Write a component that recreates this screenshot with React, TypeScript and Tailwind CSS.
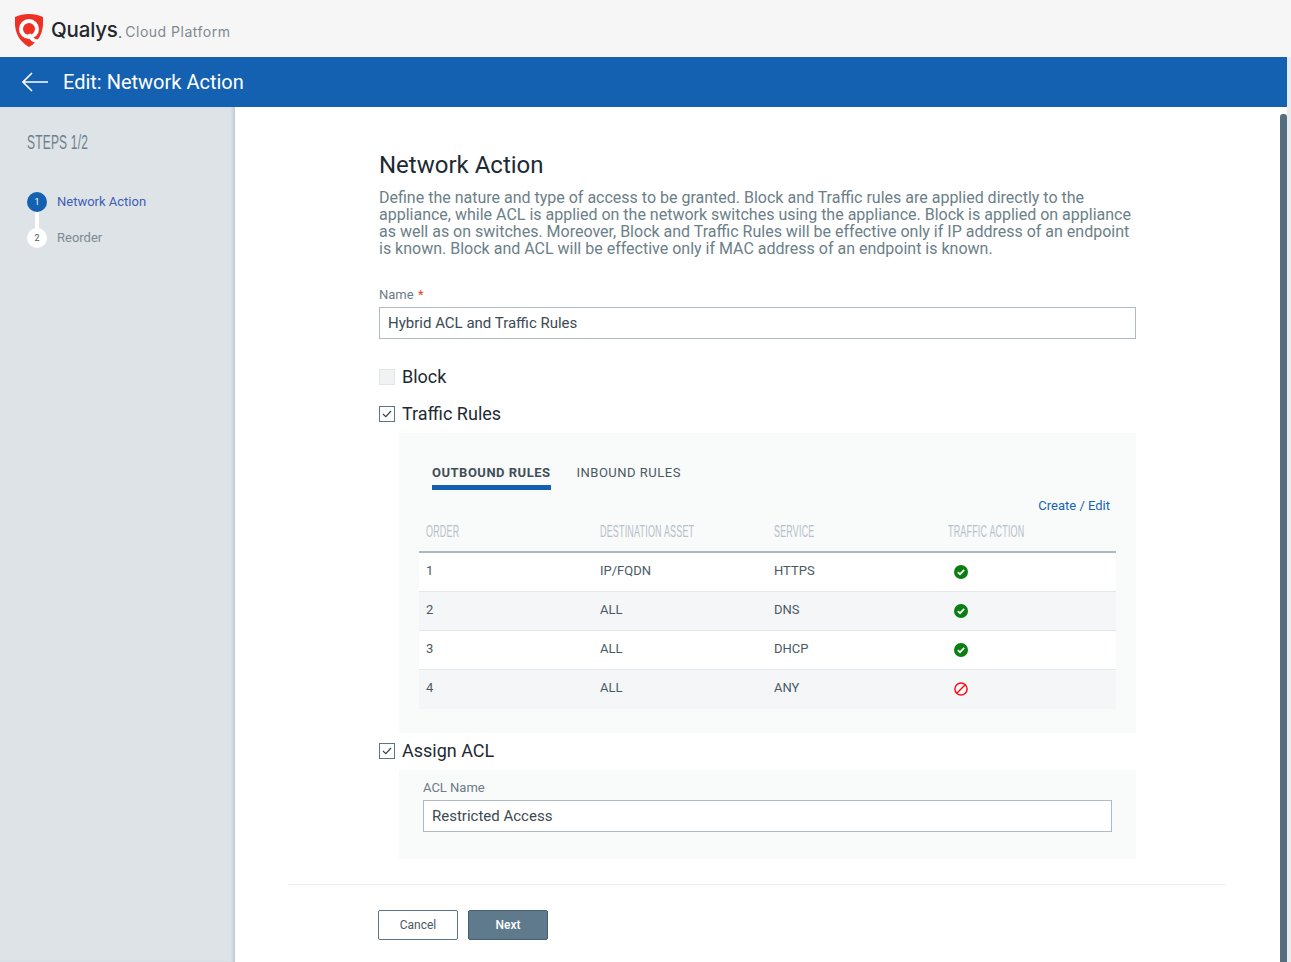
const roboto = "font-['Roboto','Liberation_Sans',sans-serif]";

const rules = [
  { order: "1", dest: "IP/FQDN", service: "HTTPS", allow: true },
  { order: "2", dest: "ALL", service: "DNS", allow: true },
  { order: "3", dest: "ALL", service: "DHCP", allow: true },
  { order: "4", dest: "ALL", service: "ANY", allow: false },
];

function Logo() {
  return (
    <svg width="28" height="33" viewBox="0 0 28 33" className="shrink-0">
      <path d="M14 0C19 0 24 1 28 3C28.6 14 27.5 25 14 33C0.5 25 -0.6 14 0 3C4 1 9 0 14 0Z" fill="#ee3124" />
      <circle cx="14" cy="15" r="8" fill="none" stroke="#fff" strokeWidth="4" />
      <path d="M14 20C15 24 18.5 27 23.5 27.5" fill="none" stroke="#fff" strokeWidth="3.4" />
    </svg>
  );
}

function Check({ on, disabled }: { on?: boolean; disabled?: boolean }) {
  return (
    <span className={`w-4 h-4 shrink-0 flex items-center justify-center border ${disabled ? "bg-[#f1f2f3] border-[#e2e5e7]" : "bg-white border-[#5b7585]"}`}>
      {on && (
        <svg width="10" height="8" viewBox="0 0 10 8">
          <path d="M1 4L3.8 6.6L9 1" fill="none" stroke="#33424c" strokeWidth="1.2" />
        </svg>
      )}
    </span>
  );
}

function CheckRow({ label, on, disabled, className }: { label: string; on?: boolean; disabled?: boolean; className?: string }) {
  return (
    <div className={`flex items-center gap-[7px] h-6 text-[18px] text-[#1d2a33] ${className ?? ""}`}>
      <Check on={on} disabled={disabled} />
      <span className="-mt-[2px]">{label}</span>
    </div>
  );
}

function HeadCell({ children }: { children: string }) {
  return (
    <div className="w-[174px] pl-[7px] overflow-visible whitespace-nowrap -mt-[2px]">
      <span className="inline-block origin-left scale-x-[0.56] font-['Liberation_Sans',sans-serif] text-[16px] tracking-[0.35px] text-[#b4c1ca]">{children}</span>
    </div>
  );
}

function StatusIcon({ allow }: { allow: boolean }) {
  if (allow) {
    return (
      <svg width="14" height="14" viewBox="0 0 14 14" className="ml-[6px] mt-[2px]">
        <circle cx="7" cy="7" r="7" fill="#0a7d13" />
        <path d="M3.8 7.2L6 9.2L10.2 4.9" fill="none" stroke="#fff" strokeWidth="1.7" />
      </svg>
    );
  }
  return (
    <svg width="14" height="14" viewBox="0 0 14 14" className="ml-[6px] mt-[2px]">
      <circle cx="7" cy="7" r="6.1" fill="none" stroke="#f5121c" strokeWidth="1.5" />
      <path d="M2.8 11.2L11.2 2.8" stroke="#f5121c" strokeWidth="1.5" />
    </svg>
  );
}

export default function App() {
  return (
    <div className={`h-screen overflow-hidden bg-white ${roboto}`}>
      <div className="h-[57px] bg-[#f6f6f6] flex items-center pl-[15px] pt-[3px]">
        <Logo />
        <span className="ml-[8px] font-['Inter',sans-serif] font-medium text-[20.5px] tracking-[-0.2px] text-[#23282c]">Qualys</span>
        <span className="font-['Inter',sans-serif] text-[16px] text-[#6b7a84] leading-none mt-[3px]">.</span>
        <span className="ml-[3px] mt-[2px] font-['Inter',sans-serif] text-[14px] tracking-[0.5px] text-[#7d8a94]">Cloud Platform</span>
      </div>

      <div className="flex h-[905px]">
        <div className="flex-1 min-w-0 flex flex-col">
          <div className="h-[50px] shrink-0 bg-[#1361b0] flex items-center pl-[22px] text-white">
            <svg width="26" height="20" viewBox="0 0 26 20">
              <path d="M26 10H1M10 1L1 10L10 19" fill="none" stroke="#fff" strokeWidth="1.6" />
            </svg>
            <span className="ml-[15px] text-[20px]">Edit: Network Action</span>
          </div>

          <div className="flex flex-1 min-h-0">
            <aside className="w-[235px] shrink-0 bg-[#dde3e7] shadow-[inset_-3px_0_3px_-1px_#bfc9cf] pl-[27px] pt-[24px]">
              <div className="h-[22px] whitespace-nowrap">
                <span className="inline-block origin-left scale-x-[0.57] font-['Liberation_Sans',sans-serif] text-[21px] tracking-[0.35px] leading-[22px] text-[#6d818c]">STEPS 1/2</span>
              </div>
              <div className="mt-[39px] flex items-center gap-[10px] h-5">
                <span className="w-5 h-5 pt-[1px] rounded-full bg-[#1361b0] text-white text-[9px] flex items-center justify-center">1</span>
                <span className="text-[13px] text-[#3d5eb3]">Network Action</span>
              </div>
              <div className="w-1 h-4 ml-2 bg-white" />
              <div className="flex items-center gap-[10px] h-5">
                <span className="w-5 h-5 pt-[1px] rounded-full bg-white text-[#4a5961] text-[9px] flex items-center justify-center">2</span>
                <span className="text-[13px] text-[#7b8a92]">Reorder</span>
              </div>
            </aside>

            <main className="flex-1 min-w-0 flex flex-col">
              <div className="pl-[144px] pt-[43px]">
                <div className="w-[757px]">
                  <h1 className="text-[24px] leading-[30px] text-[#1d2a33]">Network Action</h1>
                  <p className="mt-[9px] text-[16px] leading-[17px] text-[#6b8088]">
                    Define the nature and type of access to be granted. Block and Traffic rules are applied directly to the appliance, while ACL is applied on the network switches using the appliance. Block is applied on appliance as well as on switches. Moreover, Block and Traffic Rules will be effective only if IP address of an endpoint is known. Block and ACL will be effective only if MAC address of an endpoint is known.
                  </p>

                  <div className="mt-[29px] h-[17px] text-[13px] leading-[17px] text-[#6b7c88]">
                    Name <span className="ml-[1px] text-[#e8412f]">*</span>
                  </div>
                  <div className="mt-[4px] h-8 border border-[#aebbc4] px-2 flex items-center text-[15px] text-[#3c4a52]">Hybrid ACL and Traffic Rules</div>

                  <CheckRow label="Block" disabled className="mt-[26px]" />
                  <CheckRow label="Traffic Rules" on className="mt-[13px]" />

                  <div className="mt-[7px] ml-5 h-[300px] bg-[#f9fafa] pl-5 pr-5">
                    <div className="flex pl-[13px] pt-[32px] gap-[26px] text-[13px] leading-[15px] tracking-[0.5px]">
                      <div className="h-[25px] border-b-[5px] border-[#1361b0] font-bold text-[#414f58]">OUTBOUND RULES</div>
                      <div className="text-[#4a5862]">INBOUND RULES</div>
                    </div>
                    <div className="mt-[7px] pr-[6px] h-[17px] text-right text-[13px] leading-[17px] text-[#1565b5]">Create / Edit</div>
                    <div className="flex h-[36px] mt-[1px] items-center border-b-2 border-[#aab8c2] box-content">
                      <HeadCell>ORDER</HeadCell>
                      <HeadCell>DESTINATION ASSET</HeadCell>
                      <HeadCell>SERVICE</HeadCell>
                      <HeadCell>TRAFFIC ACTION</HeadCell>
                    </div>
                    {rules.map((r, i) => (
                      <div key={r.order} className={`flex items-center h-[39px] border-b text-[13px] text-[#495a64] ${i === 3 ? "border-transparent" : "border-[#e5e8ea]"} ${i % 2 === 0 ? "bg-white" : "bg-[#f5f6f8]"}`}>
                        <div className="w-[174px] pl-[7px] pb-[2px]">{r.order}</div>
                        <div className="w-[174px] pl-[7px] pb-[2px]">{r.dest}</div>
                        <div className="w-[174px] pl-[7px] pb-[2px]">{r.service}</div>
                        <div className="w-[174px] pl-[7px] pb-[2px]">
                          <StatusIcon allow={r.allow} />
                        </div>
                      </div>
                    ))}
                  </div>

                  <CheckRow label="Assign ACL" on className="mt-[6px]" />
                  <div className="mt-[7px] ml-5 h-[89px] bg-[#f9fafa] pl-6 pr-6 pt-[9px]">
                    <div className="h-[17px] text-[13px] leading-[17px] text-[#6b7c88]">ACL Name</div>
                    <div className="mt-[4px] h-8 bg-white border border-[#aebbc4] px-2 flex items-center text-[15px] text-[#3c4a52]">Restricted Access</div>
                  </div>
                </div>
              </div>

              <div className="mt-[25px] ml-[53px] w-[939px] border-t border-[#eef0f1]" />
              <div className="mt-[25px] ml-[143px] flex gap-[10px] text-[12px]">
                <button className="w-20 h-[30px] bg-white border border-[#5b7585] rounded-[2px] text-[#4a5862]">Cancel</button>
                <button className="w-20 h-[30px] bg-[#5f7a8c] border border-[#465f6e] rounded-[2px] text-white font-medium">Next</button>
              </div>
            </main>

            <div className="w-[7px] shrink-0 pt-[7px] bg-white">
              <div className="h-full rounded-t-[3px] bg-[#566f7f]" />
            </div>
          </div>
        </div>
        <div className="w-1 shrink-0 bg-[#e9ecee]" />
      </div>
    </div>
  );
}
